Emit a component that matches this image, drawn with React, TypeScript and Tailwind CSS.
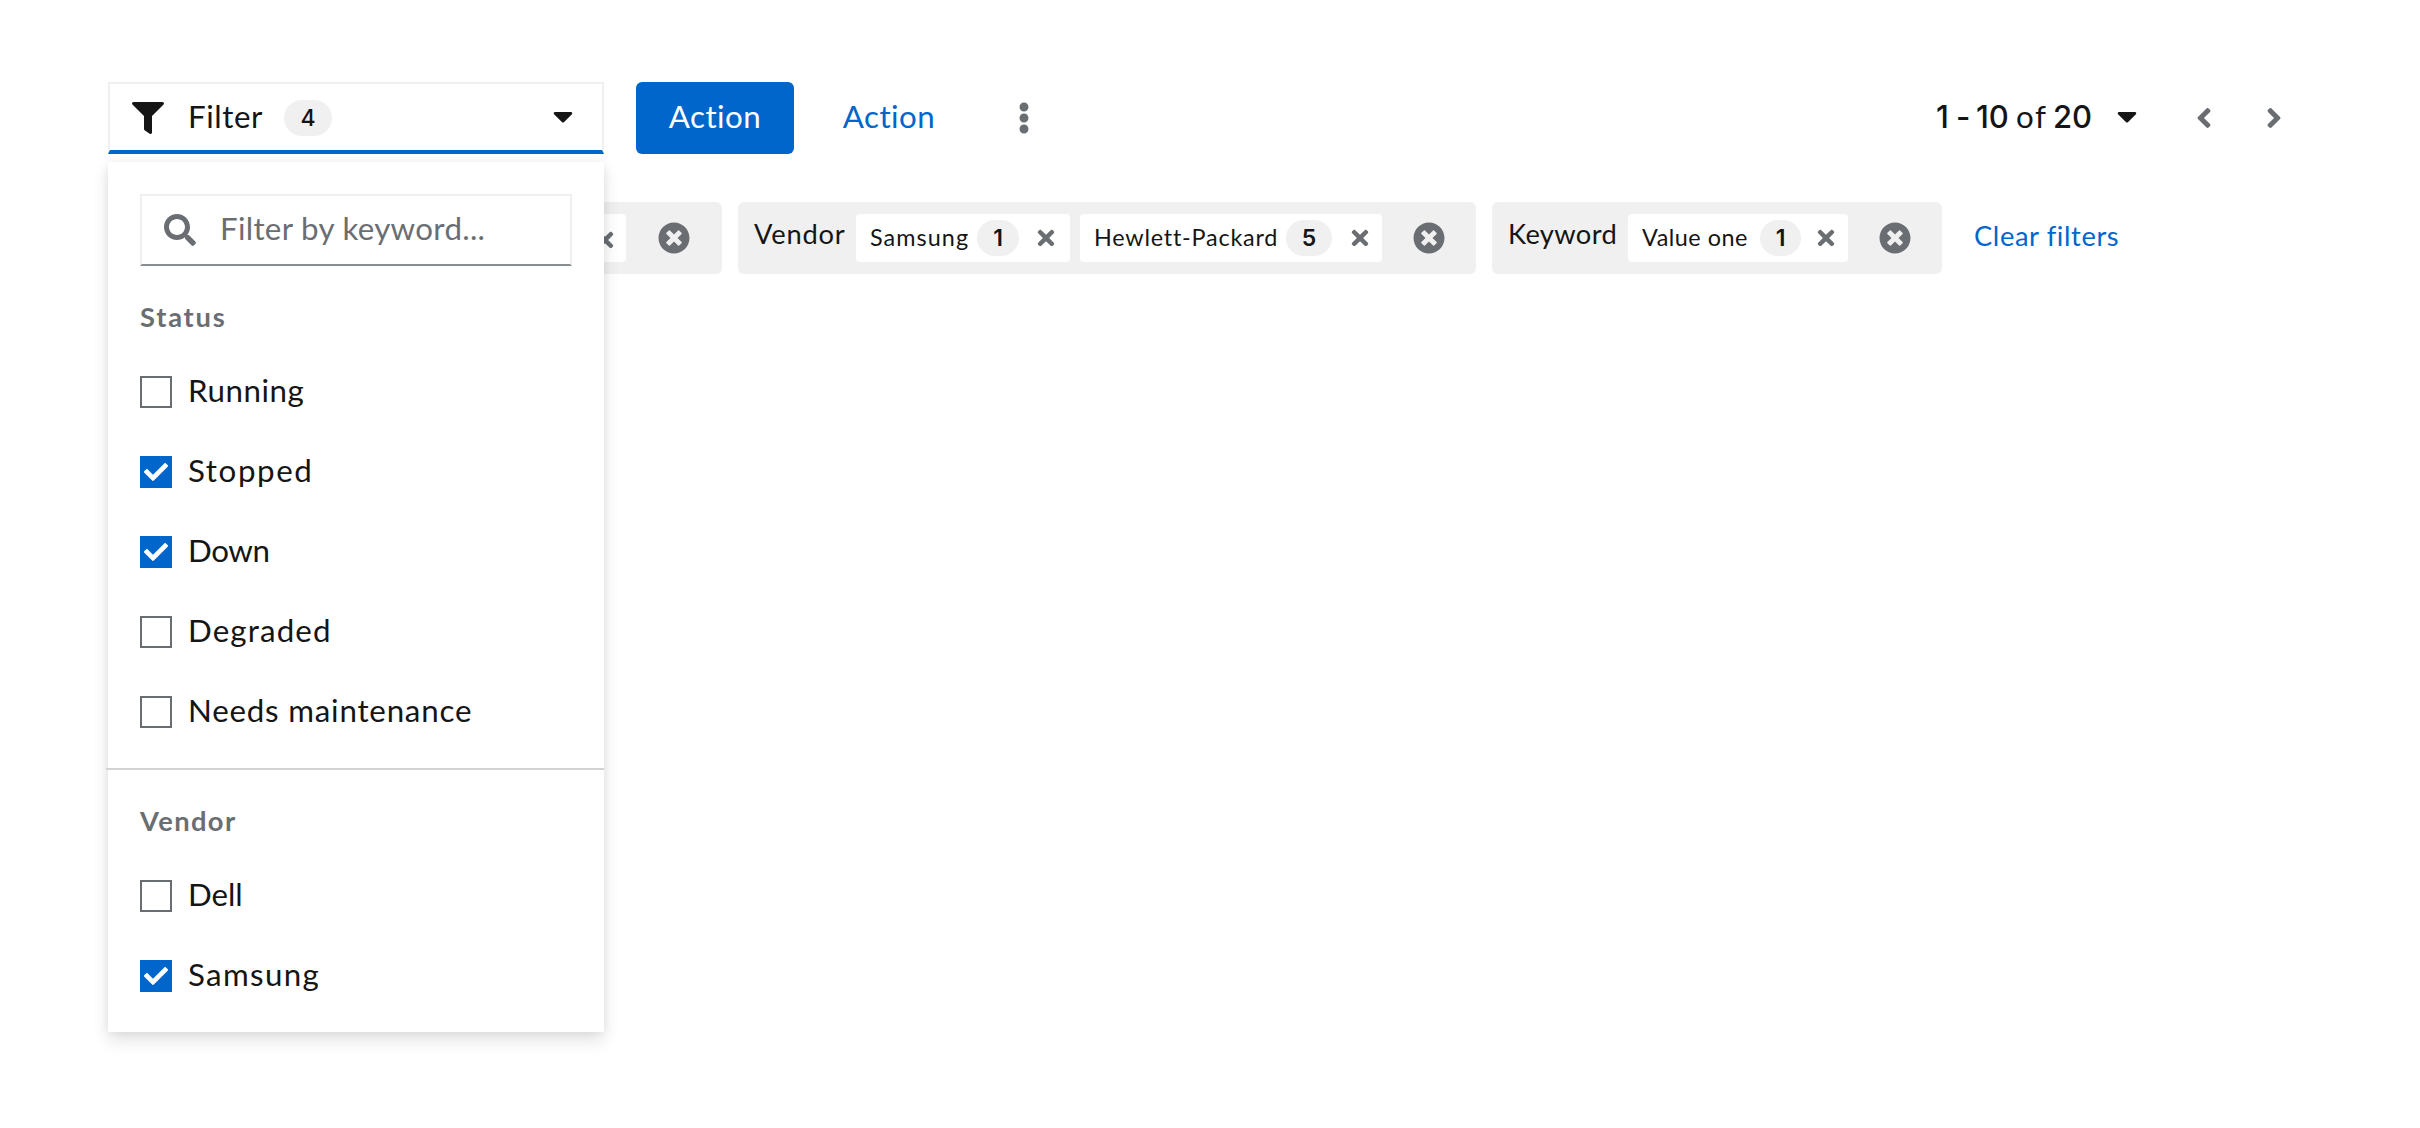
import React from "react";
import {
  FaAngleLeft,
  FaAngleRight,
  FaCaretDown,
  FaCheck,
  FaEllipsisV,
  FaFilter,
  FaSearch,
  FaTimes,
  FaTimesCircle,
} from "react-icons/fa";

function Badge({ children, className }: { children: React.ReactNode; className: string }) {
  return (
    <span
      className={`flex h-9 shrink-0 items-center justify-center rounded-full bg-[#f0f0f0] font-['Inter',sans-serif] text-[23px] leading-9 text-[#151515] ${className}`}
    >
      {children}
    </span>
  );
}

type ChipProps = { label: string; count: string; className: string; labelClass: string; badgeClass: string; closeClass: string };

function Chip({ label, count, className, labelClass, badgeClass, closeClass }: ChipProps) {
  return (
    <div className={`flex h-12 shrink-0 items-center rounded-[4px] bg-white ${className}`}>
      <span className={`shrink-0 whitespace-nowrap pb-0.5 text-[23.4px] leading-[46px] ${labelClass}`}>{label}</span>
      <Badge className={`font-semibold ${badgeClass}`}>{count}</Badge>
      <FaTimes className={`size-6 shrink-0 text-[#6a6e73] ${closeClass}`} />
    </div>
  );
}

function ChipGroup({ name, nameClass, className, children }: { name: string; nameClass: string; className: string; children: React.ReactNode }) {
  return (
    <div className={`flex h-[72px] shrink-0 items-center rounded-[6px] bg-[#f0f0f0] ${className}`}>
      <span className={`shrink-0 whitespace-nowrap pb-[9px] text-[27.3px] leading-[42px] ${nameClass}`}>{name}</span>
      {children}
      <FaTimesCircle className="mb-px ml-auto size-8 shrink-0 text-[#6a6e73]" />
    </div>
  );
}

function Option({ label, checked, spacing }: { label: string; checked?: boolean; spacing: string }) {
  return (
    <div className="flex h-20 items-center">
      {checked ? (
        <span className="flex size-8 items-center justify-center bg-[#0066cc] text-white">
          <FaCheck className="size-6" />
        </span>
      ) : (
        <span className="size-8 border-2 border-[#6a6e73] bg-white" />
      )}
      <span className={`ml-4 whitespace-nowrap pb-1 text-[31.3px] leading-10 ${spacing}`}>{label}</span>
    </div>
  );
}

function FilterMenu() {
  return (
    <div className="absolute left-0 top-20 z-10 h-[870px] w-[496px] bg-white pt-8 shadow-[0_8px_16px_rgba(3,3,3,0.12),0_0_8px_rgba(3,3,3,0.06)]">
      <div className="mx-8 flex h-[72px] items-center border-2 border-[#f0f0f0] border-b-[#8a8d90] pl-[22px] text-[#6a6e73]">
        <FaSearch className="size-8" />
        <span className="ml-6 pb-1 text-[31.3px] leading-10 tracking-[0.3px]">Filter by keyword...</span>
      </div>
      <div className="px-8 pt-[30px]">
        <div className="h-11 text-[27.3px] font-bold leading-[42px] tracking-[1.8px] text-[#6a6e73]">Status</div>
        <div className="pt-3">
          <Option label="Running" spacing="tracking-[0.53px]" />
          <Option label="Stopped" checked spacing="tracking-[1.6px]" />
          <Option label="Down" checked spacing="tracking-[-0.4px]" />
          <Option label="Degraded" spacing="tracking-[1.12px]" />
          <Option label="Needs maintenance" spacing="tracking-[0.78px]" />
        </div>
      </div>
      <div className="-ml-0.5 mt-4 h-0.5 bg-[#d2d2d2]" />
      <div className="px-8 pt-[30px]">
        <div className="h-11 text-[27.3px] font-bold leading-[42px] tracking-[1.4px] text-[#6a6e73]">Vendor</div>
        <div className="pt-3">
          <Option label="Dell" spacing="tracking-[-0.1px]" />
          <Option label="Samsung" checked spacing="tracking-[1.33px]" />
        </div>
      </div>
    </div>
  );
}

export default function App() {
  return (
    <div className="h-[1128px] w-[2420px] overflow-hidden bg-white px-[108px] pt-[82px] font-['Lato',sans-serif] text-[#151515]">
      <div className="flex h-[72px] items-center">
        <div className="relative h-[72px] w-[496px]">
          <div className="flex h-[72px] items-center border-2 border-b-4 border-[#f0f0f0] border-b-[#0066cc] pl-[22px] pt-0.5">
            <FaFilter className="size-8" />
            <span className="ml-6 w-24 pb-1 text-[31.3px] leading-10 tracking-[0.56px]">Filter</span>
            <Badge className="w-12 font-medium">4</Badge>
            <FaCaretDown className="mb-1 ml-auto mr-[23px] size-8" />
          </div>
          <FilterMenu />
        </div>
        <button className="ml-8 h-[72px] w-[158px] rounded-[6px] bg-[#0066cc] pb-1 text-[31.3px] leading-10 tracking-[0.45px] text-white">Action</button>
        <button className="ml-4 h-[72px] w-[158px] pb-1 text-[31.3px] leading-10 tracking-[0.45px] text-[#0066cc]">Action</button>
        <FaEllipsisV className="mb-px ml-10 size-8 text-[#6a6e73]" />
        <div className="ml-auto flex items-center">
          <div className="flex items-baseline whitespace-nowrap pb-[3px] font-['Inter',sans-serif] text-[31px] font-medium leading-10">
            <span className="w-[20px]">1</span>
            <span className="w-[20px]">-</span>
            <span className="w-[40px]">10</span>
            <span className="w-[37px] font-['Lato',sans-serif] text-[31.3px] font-normal tracking-[1.6px]">of</span>
            <span className="w-[40px]">20</span>
          </div>
          <FaCaretDown className="mb-1 ml-[18px] size-8" />
          <FaAngleLeft className="ml-[45px] size-8 text-[#6a6e73]" />
          <FaAngleRight className="ml-[38px] mr-[22px] size-8 text-[#6a6e73]" />
        </div>
      </div>

      <div className="mt-12 flex items-center">
        {/* The open filter menu covers the start of this group. */}
        <div className="flex h-[72px] w-[614px] shrink-0 items-center rounded-[6px] bg-[#f0f0f0] pr-8">
          <div className="ml-[302px] flex h-12 w-[216px] shrink-0 items-center justify-end rounded-[4px] bg-white pr-[9px] pt-1">
            <FaTimes className="size-6 text-[#6a6e73]" />
          </div>
          <FaTimesCircle className="mb-px ml-auto size-8 shrink-0 text-[#6a6e73]" />
        </div>
        <ChipGroup name="Vendor" nameClass="w-[102px] tracking-[0.8px]" className="ml-4 w-[738px] pl-4 pr-[31px]">
          <Chip label="Samsung" count="1" className="w-[214px]" labelClass="ml-[14px] w-[107px] tracking-[1.06px]" badgeClass="w-[42px]" closeClass="ml-[15px]" />
          <Chip label="Hewlett-Packard" count="5" className="ml-2.5 w-[302px]" labelClass="ml-[14px] w-[192px] tracking-[0.78px]" badgeClass="w-[46px]" closeClass="ml-4" />
        </ChipGroup>
        <ChipGroup name="Keyword" nameClass="w-[120px] tracking-[0.35px]" className="ml-4 w-[450px] pl-4 pr-[31px]">
          <Chip label="Value one" count="1" className="w-[220px]" labelClass="ml-[14px] w-[118px] tracking-[0.51px]" badgeClass="w-[41px]" closeClass="ml-[13px]" />
        </ChipGroup>
        <button className="ml-8 pb-[5px] text-[27.3px] leading-[42px] tracking-[0.61px] text-[#0066cc]">Clear filters</button>
      </div>
    </div>
  );
}
